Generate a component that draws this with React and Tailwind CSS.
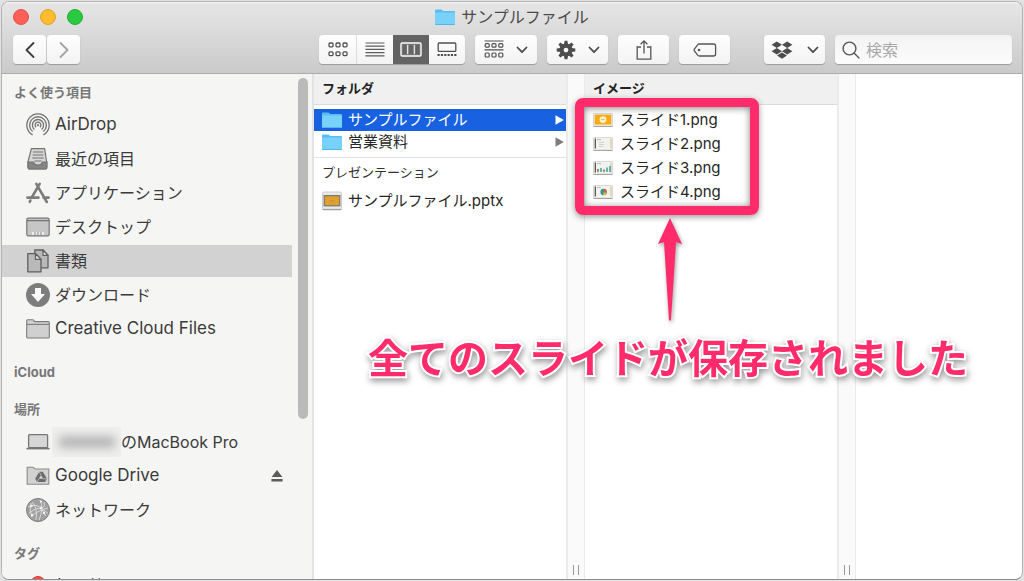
import React, { useState } from 'react'

function FolderIcon() {
  return (
    <svg viewBox="0 0 20 16" className="w-5 h-4 shrink-0">
      <path d="M0 1.5Q0 .5 1 .5H6.2Q6.8 .5 7.2 1L8 2H19Q20 2 20 3V15Q20 16 19 16H1Q0 16 0 15Z" fill="#58bdf0" />
      <path d="M0 3.6H20V15Q20 15.6 19 15.6H1Q0 15.6 0 15Z" fill="#77d1fb" />
      <path d="M.5 15.6H19.5" stroke="#4aaede" strokeWidth=".8" />
    </svg>
  )
}

function ChevronDown() {
  return (
    <svg viewBox="0 0 12 8" className="w-3 h-2" fill="none" stroke="#4a4a4a" strokeWidth="1.8" strokeLinecap="round" strokeLinejoin="round">
      <path d="M1.5 1.5L6 6.2L10.5 1.5" />
    </svg>
  )
}

function GridView() {
  return (
    <svg viewBox="0 0 20 15" className="w-5 h-[15px]" fill="none" stroke="#4f4f4f" strokeWidth="1.3">
      {[1, 8, 15].map(x => (
        <g key={x}>
          <rect x={x} y="1" width="4" height="3.8" rx="1" />
          <rect x={x} y="9.8" width="4" height="3.8" rx="1" />
        </g>
      ))}
    </svg>
  )
}

function ListView() {
  return (
    <svg viewBox="0 0 20 15" className="w-5 h-[15px]" stroke="#5c5c5c" strokeWidth="1.2">
      <path d="M.5 1H19.5M.5 4.2H19.5M.5 7.4H19.5M.5 10.6H19.5M.5 13.8H19.5" />
    </svg>
  )
}

function ColumnView() {
  return (
    <svg viewBox="0 0 22 15" className="w-[22px] h-[15px]" fill="none" stroke="#fff" strokeWidth="1.4">
      <rect x="1" y="1" width="20" height="13" rx="1.2" />
      <path d="M7.7 2.8V12.2M14.3 2.8V12.2" strokeWidth="1.2" />
      <path d="M2.6 2.6H6.8V12.4H2.6ZM8.8 2.6H13.2V12.4H8.8ZM15.2 2.6H19.4V12.4H15.2Z" stroke="#8d8d8d" strokeWidth=".5" />
    </svg>
  )
}

function GalleryView() {
  return (
    <svg viewBox="0 0 20 15" className="w-5 h-[15px]" fill="none" stroke="#4f4f4f" strokeWidth="1.3">
      <rect x="1.2" y="1" width="17.6" height="8.4" rx="1" />
      <path d="M.5 13H19.5" strokeWidth="2" strokeDasharray="2.2 1.15" />
    </svg>
  )
}

function GroupIcon() {
  return (
    <svg viewBox="0 0 20 19" className="w-5 h-[19px]" fill="none" stroke="#4f4f4f" strokeWidth="1.2">
      <path d="M.5 1H19.5M.5 9.8H19.5" />
      {[1.2, 8, 14.8].map(x => (
        <g key={x}>
          <rect x={x} y="3.6" width="4" height="3.6" rx="1" />
          <rect x={x} y="13" width="4" height="4" rx="1" />
        </g>
      ))}
    </svg>
  )
}

function GearIcon() {
  return (
    <svg viewBox="-10 -10 20 20" className="w-5 h-5">
      <g fill="#4d4d4d">
        {[0, 45, 90, 135, 180, 225, 270, 315].map(a => (
          <path key={a} d="M-2.1 -5.5L-1.4 -9.3H1.4L2.1 -5.5Z" transform={`rotate(${a})`} />
        ))}
      </g>
      <circle r="4.4" fill="none" stroke="#4d4d4d" strokeWidth="4.2" />
    </svg>
  )
}

function ShareIcon() {
  return (
    <svg viewBox="0 0 16 22" className="w-4 h-[22px]" fill="none" stroke="#555" strokeWidth="1.3">
      <path d="M5 8H1.2V20.2H14.8V8H11M8 14.5V2M4.6 5.2L8 1.8L11.4 5.2" />
    </svg>
  )
}

function TagIcon() {
  return (
    <svg viewBox="0 0 24 14" className="w-6 h-[14px]" fill="none" stroke="#555" strokeWidth="1.3">
      <path d="M6.2 1H20.5Q22.6 1 22.6 3V11Q22.6 13 20.5 13H6.2Q5.4 13 4.8 12.4L1.4 8Q.8 7 1.4 6L4.8 1.6Q5.4 1 6.2 1Z" />
      <circle cx="6" cy="7" r="1.3" fill="#555" stroke="none" />
    </svg>
  )
}

function DropboxIcon() {
  return (
    <svg viewBox="0 0 22 18" className="w-[22px] h-[18px]" fill="#4d4d4d">
      <path d="M5.8 .5L11 3.7L5.8 6.9L.6 3.7ZM16.2 .5L21.4 3.7L16.2 6.9L11 3.7ZM5.8 7L11 10.2L5.8 13.4L.6 10.2ZM16.2 7L21.4 10.2L16.2 13.4L11 10.2ZM11 11.4L16 14.5L11 17.7L6 14.5Z" />
    </svg>
  )
}

function AirDropIcon() {
  return (
    <svg viewBox="0 0 24 24" className="w-6 h-6" fill="none" stroke="#737373" strokeWidth="1.3">
      <path d="M6.6 21.9A11.2 11.2 0 1 1 17.4 21.9" />
      <path d="M6.6 18.6A8.4 8.4 0 1 1 17.4 18.6" />
      <path d="M8.4 16.4A5.6 5.6 0 1 1 15.6 16.4" />
      <path d="M10 14.2A2.9 2.9 0 1 1 14 14.2" />
      <circle cx="12" cy="12.2" r="1.1" fill="#737373" stroke="none" />
    </svg>
  )
}

function RecentsIcon() {
  return (
    <svg viewBox="0 0 24 24" className="w-6 h-6" fill="#d6d6d6" stroke="#757575" strokeWidth="1.2">
      <path d="M5.4 1.6H18.6L20.6 14.5V20Q20.6 22 19 22H4Q2 22 2 20V14.5Z" />
      <path d="M2 15H7.5Q8.2 18 12 18T16.5 15H21V20Q21 22 19 22H4Q2 22 2 20Z" fill="#858585" />
      <path d="M7 5H17M6.6 8H17.4M6.2 11H17.8M8.5 14H15.5" />
    </svg>
  )
}

function AppsIcon() {
  return (
    <svg viewBox="0 0 24 24" className="w-6 h-6" fill="none" stroke="#7c7c7c" strokeWidth="2.6" strokeLinecap="round">
      <path d="M10.3 2.8L20.8 21M13.7 2.8L6 16M4.4 19.5L3.8 20.8M1.4 16.6H12.5M17.5 16.6H22.6" />
    </svg>
  )
}

function DesktopIcon() {
  return (
    <svg viewBox="0 0 24 24" className="w-6 h-6" fill="#c6c6c6" stroke="#757575" strokeWidth="1.2">
      <rect x=".8" y="3.2" width="22.4" height="17.6" rx="1.6" />
      <path d="M1 5.6H23" />
      <path d="M6 17H18V20H6Z" fill="#eee" stroke="none" />
      <path d="M9 17V20M12 17V20M15 17V20" strokeWidth=".9" />
    </svg>
  )
}

function DocumentsIcon() {
  return (
    <svg viewBox="0 0 24 24" className="w-6 h-6" fill="#b9b9b9" stroke="#5f5f5f" strokeWidth="1.3" strokeLinejoin="round">
      <path d="M8.8 1H17L22 6.4V18.8H8.8Z" />
      <path d="M17 1V6.4H22Z" fill="#ededed" />
      <path d="M1.8 4.6H9.5L15 10.4V22.8H1.8Z" />
      <path d="M9.5 4.6V10.4H15Z" fill="#ededed" />
    </svg>
  )
}

function DownloadsIcon() {
  return (
    <svg viewBox="0 0 24 24" className="w-6 h-6">
      <circle cx="12" cy="12" r="12" fill="#7d7d7d" />
      <path d="M9 5H15V11H19L12 19L5 11H9Z" fill="#fafafa" />
    </svg>
  )
}

function GrayFolderIcon() {
  return (
    <svg viewBox="0 0 24 24" className="w-6 h-6" fill="#d0d0d0" stroke="#7d7d7d" strokeWidth="1.1">
      <path d="M.7 3.8Q.7 2.8 1.7 2.8H6.6Q7.4 2.8 7.9 3.6L8.5 4.6H22.3Q23.3 4.6 23.3 5.6V20Q23.3 21 22.3 21H1.7Q.7 21 .7 20Z" />
      <path d="M.7 7.4H23.3" />
    </svg>
  )
}

function LaptopIcon() {
  return (
    <svg viewBox="0 0 24 24" className="w-6 h-6" fill="#d6d6d6" stroke="#757575" strokeWidth="1.3">
      <rect x="2.6" y="4.6" width="19" height="13" rx="1" />
      <path d="M.4 18.6H23.6" strokeWidth="1.6" />
    </svg>
  )
}

function DriveFolderIcon() {
  return (
    <svg viewBox="0 0 24 24" className="w-6 h-6">
      <path d="M1.2 3.2H7L9 5H22.8V20.2H1.2Z" fill="#d2d2d2" stroke="#8a8a8a" strokeWidth="1.1" />
      <path d="M13.2 7.8H16.8L21 14.8L19 18H11L9.2 14.8Z" fill="#6b6b6b" />
      <path d="M15 11L17.2 14.8H12.8Z" fill="#d2d2d2" />
      <path d="M15 11L13.2 7.8M17.2 14.8H21M12.8 14.8L11 18" stroke="#d2d2d2" strokeWidth=".7" />
    </svg>
  )
}

function NetworkIcon() {
  return (
    <svg viewBox="0 0 24 24" className="w-6 h-6">
      <circle cx="12" cy="12" r="11.5" fill="#a0a0a0" stroke="#7d7d7d" />
      <g fill="none" stroke="#dedede" strokeWidth=".9">
        <path d="M2 9Q9 5 15 10T22 15M5 5Q3 12 6 19M6 4Q12 10 10 22M14 2Q18 10 13 22M18 4Q20 9 15 10M3 15Q9 10 15 10M5 19Q12 12 22 10M15 10L20 18" />
      </g>
      <g fill="#f3f3f3">
        <circle cx="15" cy="10" r="1.3" />
        <circle cx="5.5" cy="8" r="1.2" />
        <circle cx="6" cy="17" r="1.2" />
        <circle cx="18" cy="15" r="1.2" />
        <circle cx="15" cy="3.6" r="1" />
      </g>
    </svg>
  )
}

function EjectIcon() {
  return (
    <svg viewBox="0 0 12 12" className="w-3 h-3" fill="#5c5c5c">
      <path d="M6 0L11.4 7H.6ZM.4 9H11.6V11.4H.4Z" />
    </svg>
  )
}

function PptxIcon() {
  return (
    <svg viewBox="0 0 20 20" className="w-5 h-5 shrink-0">
      <rect x=".5" y="1" width="19" height="18" rx="1.5" fill="#e9e9e9" stroke="#c4c4c4" strokeWidth=".8" />
      <path d="M.8 18.4H19.2" stroke="#999" />
      <rect x="1.6" y="4" width="16.8" height="11.4" fill="#777" />
      <rect x="2.8" y="5.2" width="14.4" height="9" fill="#dfa02f" />
      <path d="M8 9.7H12" stroke="#c08a26" strokeWidth=".8" />
    </svg>
  )
}

function SlideThumb({ kind }) {
  return (
    <svg viewBox="0 0 20 14" className="w-5 h-[14px] shrink-0">
      <rect x=".4" y=".4" width="19.2" height="13" rx=".8" fill="#f6f6f6" stroke="#c9c9c9" strokeWidth=".8" />
      <path d="M.4 13.4H19.6" stroke="#999" strokeWidth=".9" />
      {kind === 'title' && (
        <g>
          <rect x="1.6" y="1.6" width="16.8" height="10" fill="#f6ab17" />
          <circle cx="10" cy="6.6" r="3.4" fill="#fff2cf" />
          <path d="M8 6.6H12" stroke="#d5b469" strokeWidth=".8" />
        </g>
      )}
      {kind !== 'title' && (
        <g>
          <rect x="1.6" y="1.6" width="16.8" height="10" fill="#f1f1ee" />
          <path d="M2.3 1.6V11.6" stroke="#5b4634" strokeWidth="1.2" />
          <path d="M18 1.6V11.6" stroke="#d9b77c" strokeWidth=".9" />
          <path d="M4 2.6H8" stroke="#aaa" strokeWidth=".8" />
        </g>
      )}
      {kind === 'text' && <path d="M6 5.5H11M6 7.5H11M6 9.5H10" stroke="#d2d2d2" />}
      {kind === 'chart' && (
        <g strokeWidth="1.4">
          <path d="M5 8V11M11 8.5V11" stroke="#44696d" />
          <path d="M8 7V11M14 6.5V11M17 5V11" stroke="#2e9b9b" />
          <path d="M5 10V11.4M11 10V11.4" stroke="#e2b13c" />
        </g>
      )}
      {kind === 'pie' && (
        <g>
          <circle cx="10.6" cy="7" r="3.2" fill="#2d9a94" />
          <path d="M10.6 7V3.8A3.2 3.2 0 0 1 13.6 8Z" fill="#dd5a3a" />
          <path d="M10.6 7L13.6 8A3.2 3.2 0 0 1 10 10.2Z" fill="#e9b035" />
        </g>
      )}
    </svg>
  )
}

const favorites = [
  { id: 'airdrop', name: 'AirDrop', icon: AirDropIcon, latin: true },
  { id: 'recents', name: '最近の項目', icon: RecentsIcon },
  { id: 'apps', name: 'アプリケーション', icon: AppsIcon },
  { id: 'desktop', name: 'デスクトップ', icon: DesktopIcon },
  { id: 'documents', name: '書類', icon: DocumentsIcon },
  { id: 'downloads', name: 'ダウンロード', icon: DownloadsIcon },
  { id: 'cc', name: 'Creative Cloud Files', icon: GrayFolderIcon, latin: true }
]

const locations = [
  { id: 'mac', name: 'のMacBook Pro', icon: LaptopIcon, masked: true },
  { id: 'gdrive', name: 'Google Drive', icon: DriveFolderIcon, eject: true, latin: true },
  { id: 'network', name: 'ネットワーク', icon: NetworkIcon }
]

const folders = ['サンプルファイル', '営業資料']

const slides = [
  { name: 'スライド1.png', kind: 'title' },
  { name: 'スライド2.png', kind: 'text' },
  { name: 'スライド3.png', kind: 'chart' },
  { name: 'スライド4.png', kind: 'pie' }
]

const views = [
  { id: 'icon', label: 'アイコン', icon: GridView },
  { id: 'list', label: 'リスト', icon: ListView },
  { id: 'column', label: 'カラム', icon: ColumnView },
  { id: 'gallery', label: 'ギャラリー', icon: GalleryView }
]

function ToolButton({ label, className = '', children }) {
  return (
    <button
      aria-label={label}
      className={`h-[29px] rounded bg-gradient-to-b from-[#fefefe] to-[#f3f3f3] shadow-[0_1px_1px_rgba(0,0,0,0.25)] flex items-center justify-center ${className}`}
    >
      {children}
    </button>
  )
}

function SidebarSection({ title, children }) {
  return (
    <section>
      <h2 className="pl-3 text-[13px] leading-5 font-bold text-[#777]">{title}</h2>
      {children && <ul className="mt-[7px] flex flex-col gap-[2px]">{children}</ul>}
    </section>
  )
}

function SidebarItem({ item, active, onSelect }) {
  const ItemIcon = item.icon
  return (
    <li className={`h-8 pl-6 pr-[9px] flex items-center ${active ? 'bg-[#d2d2d2]' : ''}`}>
      <a href="#" onClick={onSelect} className={`flex items-center gap-[5px] text-[#3a3a3a] ${item.latin ? 'text-[17px]' : 'text-base'}`}>
        <ItemIcon />
        {item.masked ? (
          <span className="flex items-center">
            <span className="-ml-[3px] w-[69px] h-[30px] bg-[#efefee] overflow-hidden flex items-center justify-center">
              <span className="w-14 h-3 bg-[#b5b5b5] blur-[5px]"></span>
            </span>
            {item.name}
          </span>
        ) : item.name}
      </a>
      {item.eject && (
        <button aria-label="取り出す" className="ml-auto"><EjectIcon /></button>
      )}
    </li>
  )
}

function Resizer() {
  return (
    <div className="w-[19px] shrink-0 border-l-2 border-r border-l-[#ebebeb] border-r-[#ebebeb] bg-[#fafafa] flex items-end justify-center gap-1 pb-1">
      <div className="w-px h-[10px] bg-[#999]"></div>
      <div className="w-px h-[10px] bg-[#999]"></div>
    </div>
  )
}

function ColumnHeader({ children }) {
  return (
    <h3 className="h-[31px] px-2 flex items-center bg-[#f0f0f0] border-b border-[#dcdcdc] text-[13px] font-bold text-[#222]">
      {children}
    </h3>
  )
}

function App() {
  const [place, setPlace] = useState('documents')
  const [view, setView] = useState('column')
  const [folder, setFolder] = useState('サンプルファイル')

  return (
    <div className="h-screen p-px bg-[#e2e2e2] font-['Inter','Noto_Sans_CJK_JP',sans-serif]">
      <div className="relative h-full flex flex-col rounded-lg border border-[#b4b4b4] border-b-[#8e8e8e] bg-white overflow-hidden">
        <header className="shrink-0 h-[72px] border-t border-t-[#f5f5f5] border-b border-b-[#acacac] bg-gradient-to-b from-[#e6e6e6] to-[#cacaca]">
          <div className="h-7 px-[11px] grid grid-cols-[1fr_auto_1fr] items-center">
            <div className="flex gap-[11px]">
              <button aria-label="閉じる" className="w-4 h-4 rounded-full bg-[#fe5f58] border border-[#e2504a]"></button>
              <button aria-label="しまう" className="w-4 h-4 rounded-full bg-[#febc2e] border border-[#e0a028]"></button>
              <button aria-label="拡大" className="w-4 h-4 rounded-full bg-[#29c940] border border-[#22ad33]"></button>
            </div>
            <h1 className="flex items-center gap-[6px] text-base text-[#4a4a4a]">
              <FolderIcon /> サンプルファイル
            </h1>
          </div>

          <div className="mt-1 pl-[11px] pr-[10px] flex items-center gap-[10px]">
            <div className="flex gap-px">
              <ToolButton label="戻る" className="w-[33px]">
                <svg viewBox="0 0 10 18" className="w-[10px] h-[18px]" fill="none" stroke="#3c3c3c" strokeWidth="1.8" strokeLinecap="round" strokeLinejoin="round">
                  <path d="M8.5 2L1.5 9L8.5 16" />
                </svg>
              </ToolButton>
              <ToolButton label="進む" className="w-[33px]">
                <svg viewBox="0 0 10 18" className="w-[10px] h-[18px]" fill="none" stroke="#a2a2a2" strokeWidth="1.8" strokeLinecap="round" strokeLinejoin="round">
                  <path d="M1.5 2L8.5 9L1.5 16" />
                </svg>
              </ToolButton>
            </div>

            <div className="ml-auto h-[29px] flex rounded bg-gradient-to-b from-[#fefefe] to-[#f3f3f3] shadow-[0_1px_1px_rgba(0,0,0,0.25)]">
              {views.map(v => (
                <button
                  key={v.id}
                  aria-label={v.label}
                  onClick={() => setView(v.id)}
                  className={`flex items-center justify-center ${v.id === 'icon' ? 'w-[38px] border-r border-[#ddd]' : 'w-9'} ${
                    view === v.id ? 'bg-[#636363]' : ''
                  }`}
                >
                  <v.icon />
                </button>
              ))}
            </div>
            <ToolButton label="グループ" className="w-[62px] gap-3">
              <GroupIcon />
              <ChevronDown />
            </ToolButton>
            <ToolButton label="アクション" className="w-[61px] gap-3">
              <GearIcon />
              <ChevronDown />
            </ToolButton>
            <ToolButton label="共有" className="w-[51px]"><ShareIcon /></ToolButton>
            <ToolButton label="タグを編集" className="w-[51px]"><TagIcon /></ToolButton>
            <ToolButton label="Dropbox" className="ml-6 w-[61px] gap-[14px]">
              <DropboxIcon />
              <ChevronDown />
            </ToolButton>
            <label className="w-[177px] h-[29px] pl-[7px] pr-2 flex items-center gap-[6px] rounded bg-gradient-to-b from-[#f3f3f3] to-[#fcfcfc] shadow-[0_1px_1px_rgba(0,0,0,0.25)]">
              <svg viewBox="0 0 18 18" className="w-[18px] h-[18px] shrink-0" fill="none" stroke="#555" strokeWidth="1.4" strokeLinecap="round">
                <circle cx="7.5" cy="7.5" r="6.4" />
                <path d="M12 12L17 17" />
              </svg>
              <input type="search" aria-label="検索" placeholder="検索" className="w-full min-w-0 bg-transparent text-base outline-none placeholder:text-[#a9a9a9]" />
            </label>
          </div>
        </header>

        <div className="flex-1 min-h-0 flex">
          <aside className="w-[312px] shrink-0 flex bg-[#f5f5f4] border-r-2 border-[#e3e3e3] overflow-hidden">
            <nav className="flex-1 min-w-0 pt-2 flex flex-col gap-[17px]">
              <SidebarSection title="よく使う項目">
                {favorites.map(item => (
                  <SidebarItem key={item.id} item={item} active={place === item.id} onSelect={() => setPlace(item.id)} />
                ))}
              </SidebarSection>
              <SidebarSection title="iCloud" />
              <SidebarSection title="場所">
                {locations.map(item => (
                  <SidebarItem key={item.id} item={item} active={place === item.id} onSelect={() => setPlace(item.id)} />
                ))}
              </SidebarSection>
              <SidebarSection title="タグ">
                <li className="h-7 pl-7 flex items-center gap-[9px] text-base text-[#3a3a3a]">
                  <span className="w-4 h-4 rounded-full bg-[#fc4b48] border border-[#e03c38]"></span>
                  レッド
                </li>
              </SidebarSection>
            </nav>
            <div className="w-5 shrink-0 pt-1 pl-[6px]">
              <div className="w-[10px] h-[341px] rounded-full bg-[#bababa]"></div>
            </div>
          </aside>

          <main className="flex-1 min-w-0 flex">
            <section className="w-[252px] shrink-0">
              <ColumnHeader>フォルダ</ColumnHeader>
              <ul className="py-1 border-b border-[#e2e2e2]">
                {folders.map(name => (
                  <li key={name}>
                    <button
                      onClick={() => setFolder(name)}
                      className={`w-full h-[22px] pl-2 pr-[2px] flex items-center gap-[6px] text-[15px] ${
                        folder === name ? 'bg-[#1861e0] text-white' : 'text-[#262626]'
                      }`}
                    >
                      <FolderIcon />
                      {name}
                      <svg viewBox="0 0 9 10" className={`ml-auto w-[9px] h-[10px] ${folder === name ? 'fill-white' : 'fill-[#7d7d7d]'}`}>
                        <path d="M.5 .3L8.8 5L.5 9.7Z" />
                      </svg>
                    </button>
                  </li>
                ))}
              </ul>
              <h3 className="pt-1 px-2 text-[13px] leading-5 text-[#333]">プレゼンテーション</h3>
              <button className="mt-2 w-full h-[22px] px-2 flex items-center gap-[6px] text-[15px] text-[#262626]">
                <PptxIcon /> サンプルファイル.pptx
              </button>
            </section>

            <Resizer />

            <section className="w-[252px] shrink-0">
              <ColumnHeader>イメージ</ColumnHeader>
              <ul className="pt-[3px]">
                {slides.map(slide => (
                  <li key={slide.name}>
                    <button className="w-full h-6 px-2 flex items-center gap-[7px] text-[15px] text-[#262626]">
                      <SlideThumb kind={slide.kind} /> {slide.name}
                    </button>
                  </li>
                ))}
              </ul>
            </section>

            <Resizer />
            <section className="flex-1 min-w-0"></section>
          </main>
        </div>

        {/* callout over the exported slides */}
        <div className="absolute left-[573px] top-24 w-[184px] h-[117px] rounded-lg bg-transparent border-[9px] border-[#ff2b6a] shadow-[0_2px_6px_rgba(0,0,0,0.4),inset_0_1px_7px_rgba(0,0,0,0.5)] pointer-events-none"></div>
        <svg viewBox="0 0 24 104" className="absolute left-[656px] top-[216px] w-6 h-[104px] drop-shadow-[1px_2px_2px_rgba(0,0,0,0.4)] pointer-events-none">
          <path d="M12 0L24 26L18 24L13 102Q12 103.5 11 102L6 24L0 26Z" fill="#ff2b6a" />
        </svg>
        <p className="absolute left-[366px] top-[324px] whitespace-nowrap text-[40px] leading-[60px] font-bold text-[#ff2b6a] font-['Noto_Sans_CJK_JP',sans-serif] [-webkit-text-stroke:4px_#fff] [paint-order:stroke_fill] drop-shadow-[1px_3px_3px_rgba(0,0,0,0.4)] pointer-events-none">
          全てのスライドが保存されました
        </p>
      </div>
    </div>
  )
}

export default App
